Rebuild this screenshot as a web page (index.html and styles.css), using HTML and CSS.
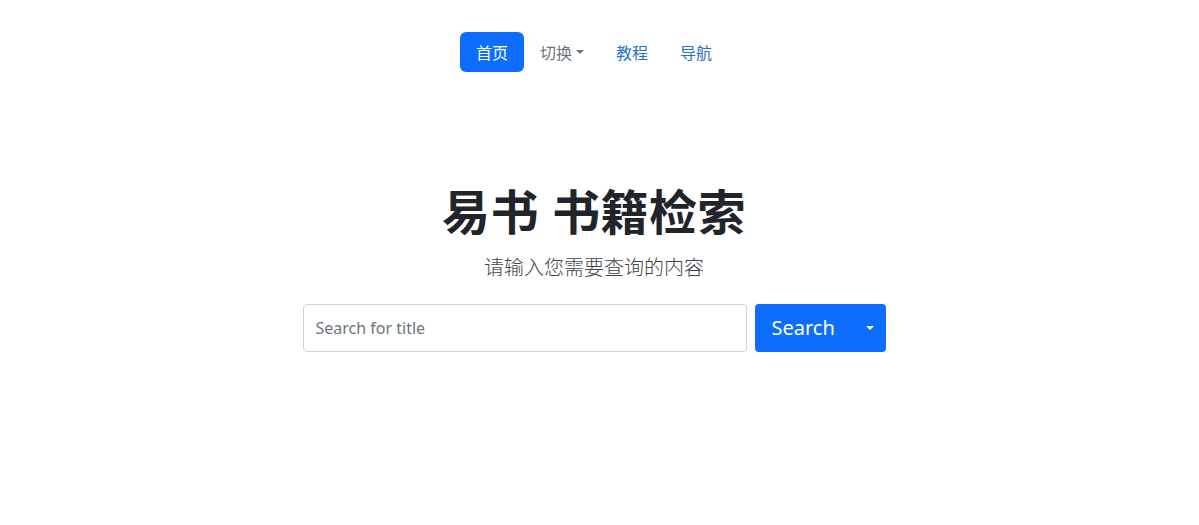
FILE: index.html
```html
<!DOCTYPE html>
<html lang="zh-CN">
<head>
<meta charset="utf-8">
<title>易书 书籍检索</title>
<link rel="stylesheet" href="styles.css">
</head>
<body>
<div class="page">
  <nav class="nav">
    <a class="nav-link active" href="#">首页</a>
    <a class="nav-link muted" href="#">切换<span class="caret"></span></a>
    <a class="nav-link" href="#">教程</a>
    <a class="nav-link" href="#">导航</a>
  </nav>
  <main class="hero">
    <h1 class="title">易书 书籍检索</h1>
    <p class="lead">请输入您需要查询的内容</p>
    <form class="search">
      <input class="input" type="text" placeholder="Search for title">
      <button class="btn" type="button">Search<span class="caret white"></span></button>
    </form>
  </main>
</div>
</body>
</html>
```

FILE: styles.css
```css
* { box-sizing: border-box; }
html, body { margin: 0; padding: 0; background: #fff; }
body {
  font-family: "Noto Sans", "Noto Sans CJK SC", sans-serif;
  color: #212529;
}
.page {
  width: 1188px;
  padding-top: 32px;
}
.nav {
  display: flex;
  justify-content: center;
  gap: 0;
}
.nav-link {
  display: flex;
  align-items: center;
  height: 40px;
  padding: 0 16px;
  font-size: 16px;
  color: #2c6fcd;
  text-decoration: none;
  border-radius: 6px;
}
.nav-link.active { background: #0d6efd; color: #fff; }
.nav-link.muted { color: #6c757d; }
.caret {
  display: inline-block;
  margin-left: 4px;
  border-top: 4px solid #6c757d;
  border-left: 4px solid transparent;
  border-right: 4px solid transparent;
  vertical-align: middle;
}
.caret.white { border-top-color: #fff; margin-left: 31px; }
.hero {
  display: flex;
  flex-direction: column;
  align-items: center;
  margin-top: 111px;
}
.title {
  margin: 0;
  font-size: 48px;
  font-weight: 700;
  line-height: 1.2;
  letter-spacing: 0.5px;
}
.lead {
  margin: 12px 0 0;
  font-size: 20px;
  font-weight: 300;
  line-height: 1.5;
  color: #3f454b;
}
.search {
  display: flex;
  gap: 8px;
  margin-top: 21px;
}
.input {
  width: 444px;
  height: 48px;
  padding: 0 12px;
  border: 1px solid #ced4da;
  border-radius: 4px;
  font-family: "Noto Sans", sans-serif;
  font-size: 16px;
  color: #212529;
}
.input::placeholder { color: #6c757d; }
.btn {
  display: flex;
  align-items: center;
  height: 48px;
  width: 131px;
  padding: 0 0 0 17px;
  border: none;
  border-radius: 4px;
  background: #0d6efd;
  color: #fff;
  font-family: "Noto Sans", sans-serif;
  font-size: 20px;
}
```
